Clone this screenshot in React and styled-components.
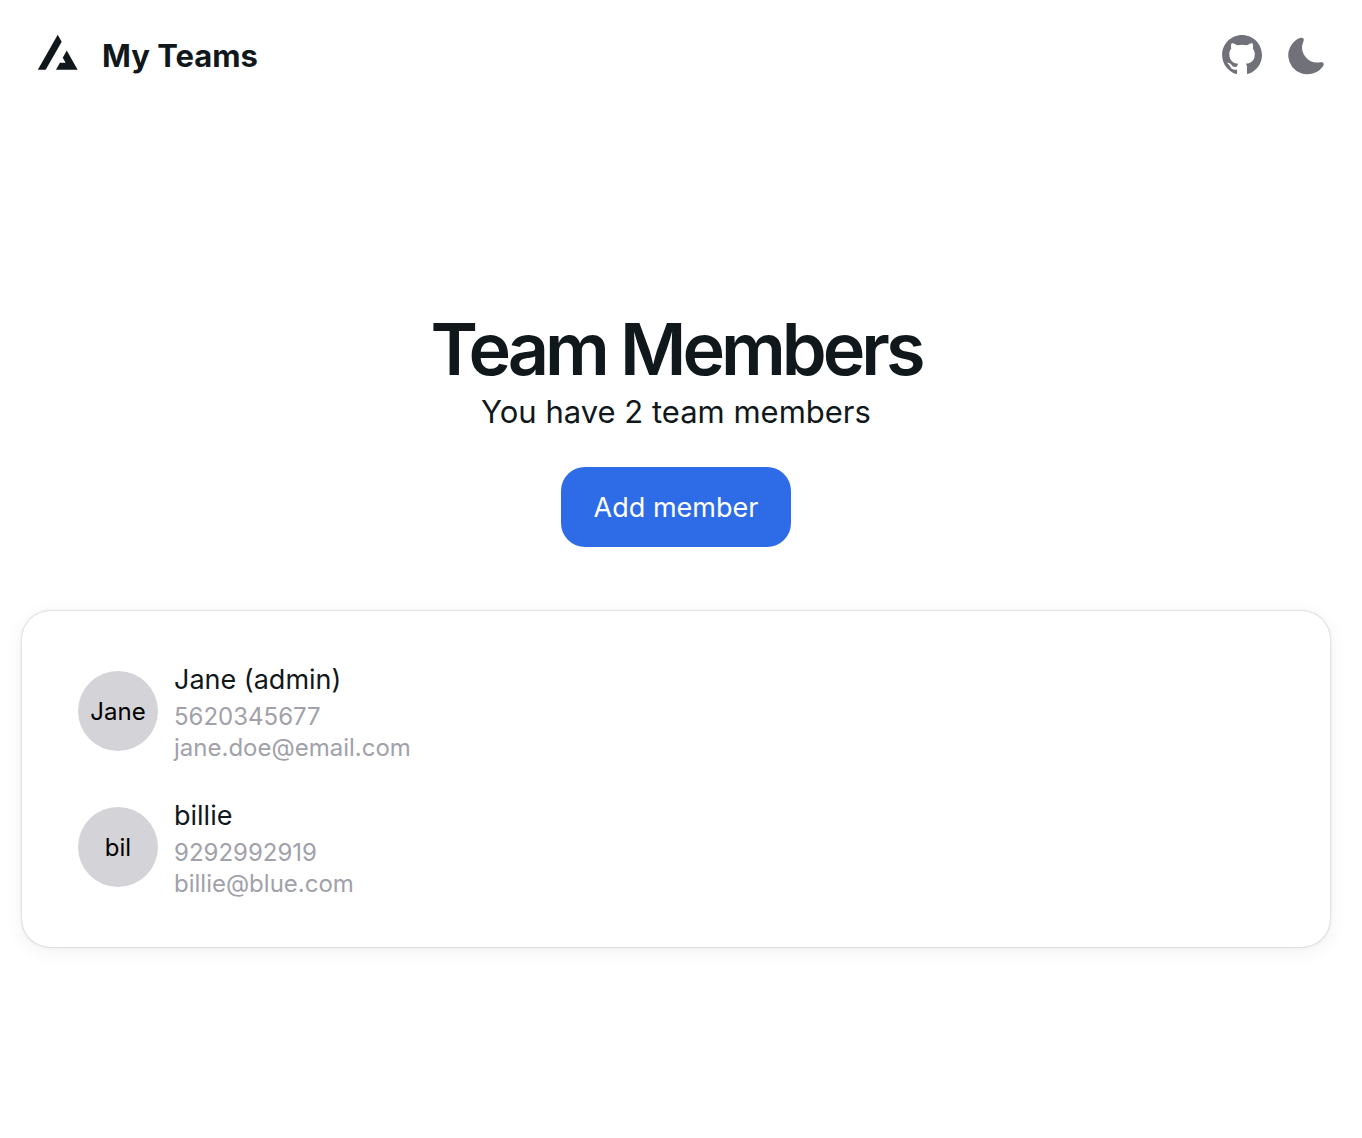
import React from "react";
import styled, { createGlobalStyle } from "styled-components";

const GlobalStyle = createGlobalStyle`
  * { box-sizing: border-box; }
  body {
    margin: 0;
    background: #fff;
    color: #11181c;
    font-family: Inter, "Liberation Sans", sans-serif;
    -webkit-font-smoothing: antialiased;
  }
`;

const Page = styled.div`
  display: flex;
  flex-direction: column;
  padding: 0 32px 48px 22px;
`;

const Header = styled.header`
  display: flex;
  align-items: center;
  justify-content: space-between;
  height: 110px;
  padding-right: 2px;
`;

const Brand = styled.a`
  display: flex;
  align-items: center;
  gap: 8px;
  color: inherit;
  text-decoration: none;
  font-size: 31px;
  line-height: 46px;
  font-weight: 700;
`;

const BrandName = styled.span`
  padding-top: 2px;
`;

const Actions = styled.nav`
  display: flex;
  align-items: center;
  gap: 18px;
  color: #71717a;
`;

const IconLink = styled.a`
  display: flex;
  color: inherit;
`;

const IconButton = styled.button`
  display: flex;
  padding: 2px 0 0;
  border: 0;
  background: none;
  color: inherit;
  cursor: pointer;
`;

const Main = styled.main`
  display: flex;
  flex-direction: column;
  padding-top: 199px;
`;

const Intro = styled.section`
  display: flex;
  flex-direction: column;
  align-items: center;
  text-align: center;
`;

const Title = styled.h1`
  margin: 0;
  font-size: 72px;
  line-height: 80px;
  font-weight: 600;
  letter-spacing: -4px;
`;

const Subtitle = styled.p`
  margin: 0;
  font-size: 31px;
  line-height: 46px;
`;

const AddButton = styled.button`
  min-width: 230px;
  height: 80px;
  margin-top: 32px;
  padding: 2px 32px 0;
  border: 0;
  border-radius: 24px;
  background: #2e6be6;
  color: #fff;
  font-family: inherit;
  font-size: 27px;
  line-height: 40px;
  cursor: pointer;
`;

const Card = styled.ul`
  display: flex;
  flex-direction: column;
  gap: 32px;
  margin: 64px 0 0;
  padding: 48px 56px;
  list-style: none;
  border-radius: 28px;
  background: #fff;
  box-shadow: 0 0 10px rgba(0, 0, 0, 0.02), 0 4px 20px rgba(0, 0, 0, 0.06),
    0 0 2px rgba(0, 0, 0, 0.3);
`;

const Member = styled.li`
  display: flex;
  align-items: center;
  gap: 16px;
`;

const Avatar = styled.span`
  display: flex;
  flex: none;
  align-items: center;
  justify-content: center;
  width: 80px;
  height: 80px;
  padding-top: 2px;
  border-radius: 50%;
  background: #d4d4d8;
  color: #000;
  font-size: 24px;
  line-height: 32px;
`;

const Details = styled.div`
  display: flex;
  flex-direction: column;
`;

const Name = styled.span`
  font-size: 27px;
  line-height: 42px;
`;

const Contact = styled.span`
  color: #a1a1aa;
  font-size: 24px;
  line-height: 31px;
`;

const Logo = () => (
  <svg width="72" height="72" viewBox="0 0 32 32" fill="currentColor" aria-hidden="true">
    <path
      fillRule="evenodd"
      clipRule="evenodd"
      d="M17.6482 10.1305L15.8785 7.02583L7.02979 22.5499H10.5278L17.6482 10.1305ZM19.8798 14.0457L18.11 17.1983L19.394 19.4511H16.8453L15.1056 22.5499H24.7272L19.8798 14.0457Z"
    />
  </svg>
);

const GithubIcon = () => (
  <svg width="48" height="48" viewBox="0 0 24 24" fill="currentColor" aria-hidden="true">
    <path
      fillRule="evenodd"
      clipRule="evenodd"
      d="M12.026 2c-5.509 0-9.974 4.465-9.974 9.974 0 4.406 2.857 8.145 6.821 9.465.499.09.679-.217.679-.481 0-.237-.008-.865-.011-1.696-2.775.602-3.361-1.338-3.361-1.338-.452-1.152-1.107-1.459-1.107-1.459-.905-.619.069-.605.069-.605 1.002.07 1.527 1.028 1.527 1.028.89 1.524 2.336 1.084 2.902.829.091-.645.351-1.085.635-1.334-2.214-.251-4.542-1.107-4.542-4.93 0-1.087.389-1.979 1.024-2.675-.101-.253-.446-1.268.099-2.64 0 0 .837-.269 2.742 1.021a9.582 9.582 0 0 1 2.496-.336 9.554 9.554 0 0 1 2.496.336c1.906-1.291 2.742-1.021 2.742-1.021.545 1.372.203 2.387.099 2.64.64.696 1.024 1.587 1.024 2.675 0 3.833-2.33 4.675-4.552 4.922.355.308.675.916.675 1.846 0 1.334-.012 2.41-.012 2.737 0 .267.178.577.687.479C19.146 20.115 22 16.379 22 11.974 22 6.465 17.535 2 12.026 2z"
    />
  </svg>
);

const MoonIcon = () => (
  <svg width="44" height="44" viewBox="0 0 24 24" fill="currentColor" aria-hidden="true">
    <path d="M21.53 15.93c-.16-.27-.61-.69-1.73-.49a8.46 8.46 0 01-1.88.13 8.409 8.409 0 01-5.91-2.82 8.068 8.068 0 01-1.44-8.66c.44-1.01.13-1.54-.09-1.76s-.77-.55-1.83-.11a10.318 10.318 0 00-6.32 10.21 10.475 10.475 0 007.04 8.99 10 10 0 002.89.55c.16.01.32.02.48.02a10.5 10.5 0 008.47-4.27c.67-.93.49-1.519.32-1.79z" />
  </svg>
);

const members = [
  { initials: "Jane", name: "Jane (admin)", phone: "5620345677", email: "jane.doe@email.com" },
  { initials: "bil", name: "billie", phone: "9292992919", email: "billie@blue.com" },
];

export default function App() {
  return (
    <>
      <GlobalStyle />
      <Page>
        <Header>
          <Brand href="#">
            <Logo />
            <BrandName>My Teams</BrandName>
          </Brand>
          <Actions>
            <IconLink href="#" aria-label="Github">
              <GithubIcon />
            </IconLink>
            <IconButton type="button" aria-label="Switch to dark mode">
              <MoonIcon />
            </IconButton>
          </Actions>
        </Header>
        <Main>
          <Intro>
            <Title>Team Members</Title>
            <Subtitle>You have {members.length} team members</Subtitle>
            <AddButton type="button">Add member</AddButton>
          </Intro>
          <Card>
            {members.map((m) => (
              <Member key={m.email}>
                <Avatar>{m.initials}</Avatar>
                <Details>
                  <Name>{m.name}</Name>
                  <Contact>{m.phone}</Contact>
                  <Contact>{m.email}</Contact>
                </Details>
              </Member>
            ))}
          </Card>
        </Main>
      </Page>
    </>
  );
}
